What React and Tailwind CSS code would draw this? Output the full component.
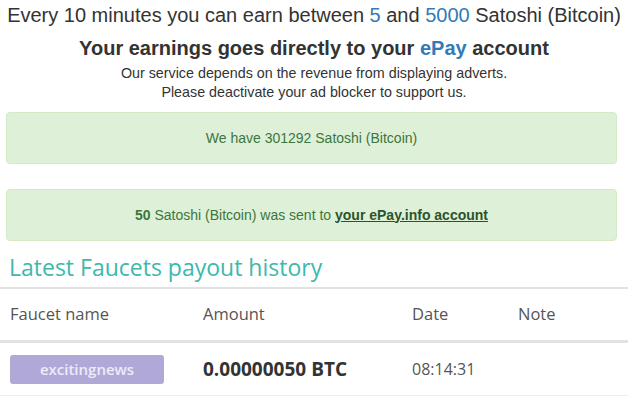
export default function App() {
  return (
    <div className="w-[628px] h-[399px] overflow-hidden bg-white">
      <div className="text-center text-[#333] font-['Liberation_Sans',Arial,sans-serif]">
        <div className="pt-[3px] text-[20px] leading-[24px]">
          Every 10 minutes you can earn between <span className="text-[#337ab7]">5</span> and{" "}
          <span className="text-[#337ab7]">5000</span> Satoshi (Bitcoin)
        </div>
        <div className="mt-[9px] text-[20px] leading-[24px] font-bold">
          Your earnings goes directly to your <span className="text-[#337ab7]">ePay</span> account
        </div>
        <div className="mt-[4px] text-[14.3px] leading-[19px]">
          Our service depends on the revenue from displaying adverts.
        </div>
        <div className="text-[14.3px] leading-[19px]">Please deactivate your ad blocker to support us.</div>
      </div>

      <div className="mt-[10px] ml-[6px] w-[611px] h-[52px] rounded-[4px] border border-[#d6e9c6] bg-[#dff0d8] flex items-center justify-center text-[14px] text-[#3c763d] font-['Liberation_Sans',Arial,sans-serif]">
        We have 301292 Satoshi (Bitcoin)
      </div>

      <div className="mt-[25px] ml-[6px] w-[611px] h-[52px] rounded-[4px] border border-[#d6e9c6] bg-[#dff0d8] flex items-center justify-center text-[14px] text-[#3c763d] font-['Liberation_Sans',Arial,sans-serif]">
        <span>
          <b>50</b> Satoshi (Bitcoin) was sent to{" "}
          <a className="font-bold underline text-[#2b542c]">your ePay.info account</a>
        </span>
      </div>

      <div className="font-['Open_Sans',sans-serif]">
        <div className="mt-[10px] pl-[9px] text-[23px] leading-[32px] text-[#3cb9ab]">Latest Faucets payout history</div>
        <div className="mt-[4px] border-t-2 border-[#e2e2e2] grid grid-cols-[193px_209px_106px_1fr] pl-[10px] h-[53px] items-center text-[16.5px] text-[#555]">
          <div>Faucet name</div>
          <div>Amount</div>
          <div>Date</div>
          <div>Note</div>
        </div>
        <div className="border-t-[3px] border-[#e2e2e2] grid grid-cols-[193px_209px_106px_1fr] pl-[10px] h-[56px] items-center border-b border-b-[#eee]">
          <div>
            <span className="flex items-center justify-center w-[154px] h-[29px] rounded-[3px] bg-[#b0a9d8] text-[#eeebf8] text-[15px] font-semibold">
              excitingnews
            </span>
          </div>
          <div className="text-[19px] font-bold text-[#333]">0.00000050 BTC</div>
          <div className="text-[16px] text-[#555]">08:14:31</div>
          <div></div>
        </div>
      </div>
    </div>
  );
}
